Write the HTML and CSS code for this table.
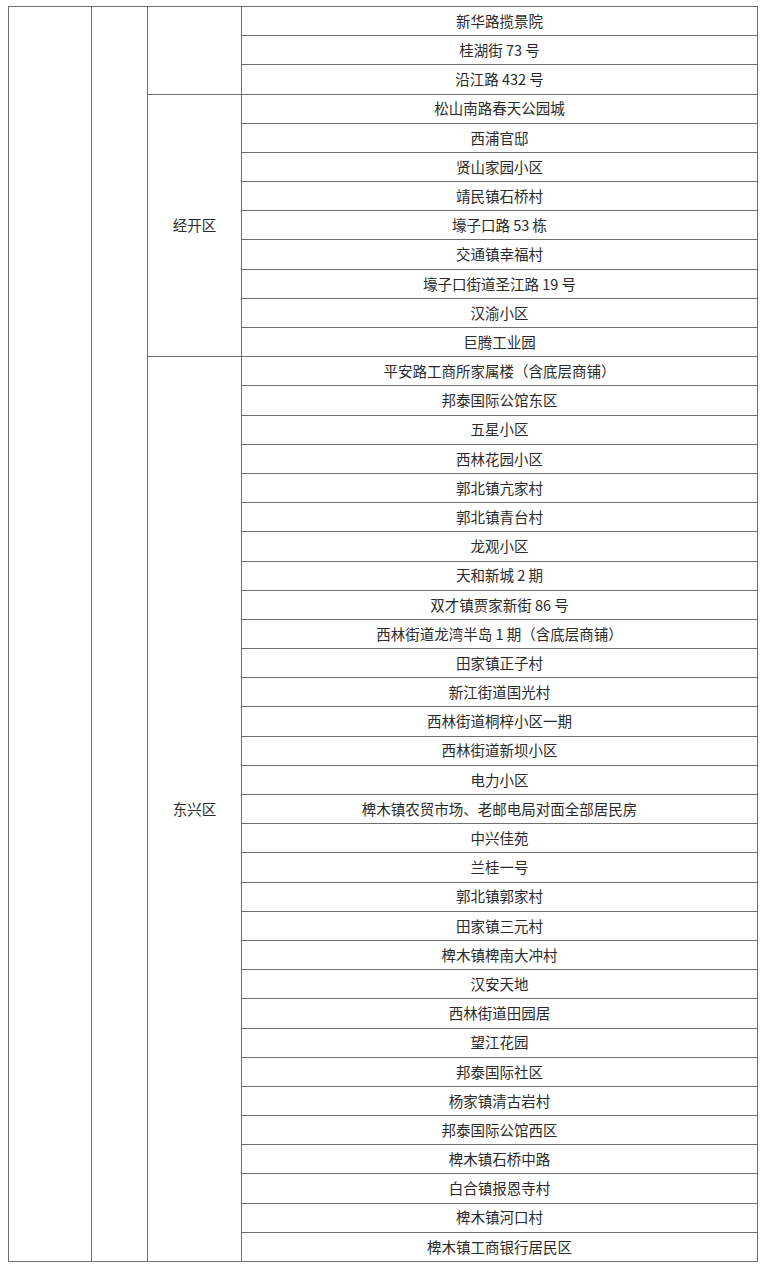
FILE: index.html
```html
<!DOCTYPE html>
<html lang="zh-CN">
<head>
<meta charset="utf-8">
<title>表格</title>
<link rel="stylesheet" href="styles.css">
</head>
<body>
<div class="tbl">
  <div class="cell c1"></div>
  <div class="cell c2"></div>
  <div class="cell c3 g1"></div>
  <div class="cell c3 g2">经开区</div>
  <div class="cell c3 g3">东兴区</div>
  <div class="cell c4">新华路揽景院</div>
  <div class="cell c4">桂湖街 73 号</div>
  <div class="cell c4">沿江路 432 号</div>
  <div class="cell c4">松山南路春天公园城</div>
  <div class="cell c4">西浦官邸</div>
  <div class="cell c4">贤山家园小区</div>
  <div class="cell c4">靖民镇石桥村</div>
  <div class="cell c4">壕子口路 53 栋</div>
  <div class="cell c4">交通镇幸福村</div>
  <div class="cell c4">壕子口街道圣江路 19 号</div>
  <div class="cell c4">汉渝小区</div>
  <div class="cell c4">巨腾工业园</div>
  <div class="cell c4">平安路工商所家属楼（含底层商铺）</div>
  <div class="cell c4">邦泰国际公馆东区</div>
  <div class="cell c4">五星小区</div>
  <div class="cell c4">西林花园小区</div>
  <div class="cell c4">郭北镇亢家村</div>
  <div class="cell c4">郭北镇青台村</div>
  <div class="cell c4">龙观小区</div>
  <div class="cell c4">天和新城 2 期</div>
  <div class="cell c4">双才镇贾家新街 86 号</div>
  <div class="cell c4">西林街道龙湾半岛 1 期（含底层商铺）</div>
  <div class="cell c4">田家镇正子村</div>
  <div class="cell c4">新江街道国光村</div>
  <div class="cell c4">西林街道桐梓小区一期</div>
  <div class="cell c4">西林街道新坝小区</div>
  <div class="cell c4">电力小区</div>
  <div class="cell c4">椑木镇农贸市场、老邮电局对面全部居民房</div>
  <div class="cell c4">中兴佳苑</div>
  <div class="cell c4">兰桂一号</div>
  <div class="cell c4">郭北镇郭家村</div>
  <div class="cell c4">田家镇三元村</div>
  <div class="cell c4">椑木镇椑南大冲村</div>
  <div class="cell c4">汉安天地</div>
  <div class="cell c4">西林街道田园居</div>
  <div class="cell c4">望江花园</div>
  <div class="cell c4">邦泰国际社区</div>
  <div class="cell c4">杨家镇清古岩村</div>
  <div class="cell c4">邦泰国际公馆西区</div>
  <div class="cell c4">椑木镇石桥中路</div>
  <div class="cell c4">白合镇报恩寺村</div>
  <div class="cell c4">椑木镇河口村</div>
  <div class="cell c4">椑木镇工商银行居民区</div>
</div>
</body>
</html>
```
FILE: styles.css
```css
html, body {
  margin: 0;
  padding: 0;
  background: #ffffff;
}
body {
  padding: 6px 0 0 8px;
  font-family: "Noto Sans CJK SC", "Noto Sans", sans-serif;
  font-size: 14.5px;
  color: #2a2a2a;
}
.tbl {
  box-sizing: border-box;
  width: 750px;
  height: 1256px;
  display: grid;
  grid-template-columns: 83px 56px 94px 516px;
  grid-template-rows: repeat(43, 1fr);
  border-top: 1px solid #6e6e6e;
  border-left: 1px solid #6e6e6e;
}
.cell {
  box-sizing: border-box;
  border-right: 1px solid #6e6e6e;
  border-bottom: 1px solid #6e6e6e;
  display: flex;
  align-items: center;
  justify-content: center;
  line-height: 1;
  white-space: nowrap;
}
.c1 { grid-column: 1; grid-row: 1 / -1; }
.c2 { grid-column: 2; grid-row: 1 / -1; }
.c3 { grid-column: 3; }
.g1 { grid-row: 1 / span 3; }
.g2 { grid-row: 4 / span 9; }
.g3 { grid-row: 13 / span 31; }
.c4 { grid-column: 4; }
```
